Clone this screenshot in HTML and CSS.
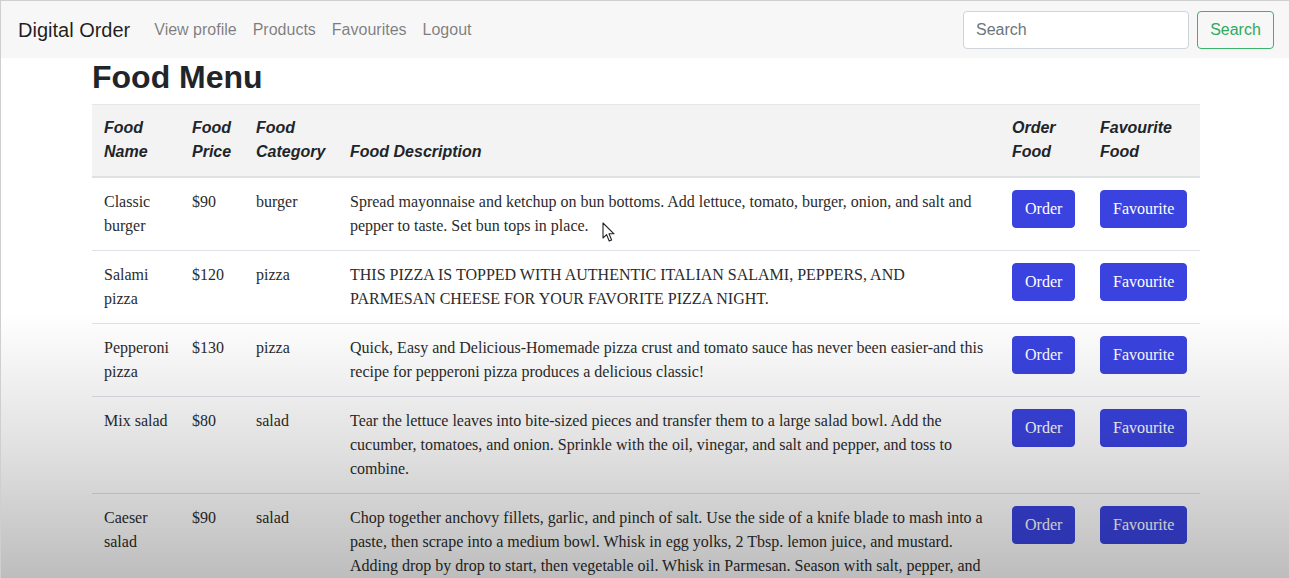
FILE: index.html
```html
<!DOCTYPE html>
<html lang="en">
<head>
<meta charset="utf-8">
<title>Digital Order</title>
<link rel="stylesheet" href="styles.css">
</head>
<body>
<div class="page">
  <nav class="navbar">
    <a class="brand" href="#">Digital Order</a>
    <ul class="nav-links">
      <li><a href="#">View profile</a></li>
      <li><a href="#">Products</a></li>
      <li><a href="#">Favourites</a></li>
      <li><a href="#">Logout</a></li>
    </ul>
    <form class="search">
      <input class="search-input" type="search" placeholder="Search">
      <button class="search-btn" type="button">Search</button>
    </form>
  </nav>

  <main class="container">
    <h2 class="title">Food Menu</h2>
    <table class="menu">
      <colgroup>
        <col class="w-name"><col class="w-price"><col class="w-cat"><col class="w-desc"><col class="w-order"><col class="w-fav">
      </colgroup>
      <thead>
        <tr>
          <th>Food Name</th>
          <th>Food Price</th>
          <th>Food Category</th>
          <th>Food Description</th>
          <th>Order Food</th>
          <th>Favourite Food</th>
        </tr>
      </thead>
      <tbody>
        <tr>
          <td>Classic burger</td>
          <td>$90</td>
          <td>burger</td>
          <td>Spread mayonnaise and ketchup on bun bottoms. Add lettuce, tomato, burger, onion, and salt and pepper to taste. Set bun tops in place.</td>
          <td><button class="btn" type="button">Order</button></td>
          <td><button class="btn" type="button">Favourite</button></td>
        </tr>
        <tr>
          <td>Salami pizza</td>
          <td>$120</td>
          <td>pizza</td>
          <td>THIS PIZZA IS TOPPED WITH AUTHENTIC ITALIAN SALAMI, PEPPERS, AND PARMESAN CHEESE FOR YOUR FAVORITE PIZZA NIGHT.</td>
          <td><button class="btn" type="button">Order</button></td>
          <td><button class="btn" type="button">Favourite</button></td>
        </tr>
        <tr>
          <td>Pepperoni pizza</td>
          <td>$130</td>
          <td>pizza</td>
          <td>Quick, Easy and Delicious-Homemade pizza crust and tomato sauce has never been easier-and this recipe for pepperoni pizza produces a delicious classic!</td>
          <td><button class="btn" type="button">Order</button></td>
          <td><button class="btn" type="button">Favourite</button></td>
        </tr>
        <tr>
          <td>Mix salad</td>
          <td>$80</td>
          <td>salad</td>
          <td>Tear the lettuce leaves into bite-sized pieces and transfer them to a large salad bowl. Add the cucumber, tomatoes, and onion. Sprinkle with the oil, vinegar, and salt and pepper, and toss to combine.</td>
          <td><button class="btn" type="button">Order</button></td>
          <td><button class="btn" type="button">Favourite</button></td>
        </tr>
        <tr>
          <td>Caeser salad</td>
          <td>$90</td>
          <td>salad</td>
          <td>Chop together anchovy fillets, garlic, and pinch of salt. Use the side of a knife blade to mash into a paste, then scrape into a medium bowl. Whisk in egg yolks, 2 Tbsp. lemon juice, and mustard. Adding drop by drop to start, then vegetable oil. Whisk in Parmesan. Season with salt, pepper, and more lemon juice.</td>
          <td><button class="btn" type="button">Order</button></td>
          <td><button class="btn" type="button">Favourite</button></td>
        </tr>
      </tbody>
    </table>
  </main>

  <div class="shade"></div>
  <svg class="cursor" width="14" height="21" viewBox="0 0 14 21" aria-hidden="true">
    <path d="M1 1 L1 16 L4.6 12.6 L7.2 19 L9.6 18 L7 11.8 L12 11.8 Z" fill="#fff" stroke="#222" stroke-width="1.1" stroke-linejoin="round"/>
  </svg>
</div>
</body>
</html>
```

FILE: styles.css
```css
* { box-sizing: border-box; }

html, body {
  margin: 0;
  padding: 0;
  background: #fff;
}

body {
  font-family: "Liberation Serif", "Times New Roman", serif;
  font-size: 16px;
  line-height: 1.5;
  color: #212529;
}

.page {
  position: relative;
  height: 578px;
  overflow: hidden;
  border-top: 1px solid #cfcfcf;
  border-left: 1px solid #cfcfcf;
}

/* Navbar */
.navbar {
  display: flex;
  align-items: center;
  height: 57px;
  padding: 0 15px 0 17px;
  background: #f7f7f8;
  font-family: "Liberation Sans", Arial, sans-serif;
}

.brand {
  font-size: 20px;
  color: rgba(0, 0, 0, 0.88);
  text-decoration: none;
  margin-right: 16px;
  line-height: 30px;
}

.nav-links {
  display: flex;
  list-style: none;
  margin: 0;
  padding: 0;
  flex: 1;
}

.nav-links a {
  display: block;
  padding: 8px 8px;
  font-size: 16px;
  color: rgba(0, 0, 0, 0.5);
  text-decoration: none;
}

.search {
  display: flex;
  align-items: center;
  margin: 0;
}

.search-input {
  width: 226px;
  height: 38px;
  padding: 6px 12px;
  font-family: "Liberation Sans", Arial, sans-serif;
  font-size: 16px;
  color: #495057;
  background: #fff;
  border: 1px solid #ced4da;
  border-radius: 4px;
  outline: none;
}

.search-input::placeholder { color: #6c757d; }

.search-btn {
  margin-left: 8px;
  height: 38px;
  width: 77px;
  padding: 6px 12px;
  font-family: "Liberation Sans", Arial, sans-serif;
  font-size: 16px;
  color: #2eaa5a;
  background: transparent;
  border: 1px solid #3bb36a;
  border-radius: 4px;
}

/* Content */
.container {
  width: 1108px;
  margin-left: 91px;
}

.title {
  margin: 0 0 8px;
  font-family: "Liberation Sans", Arial, sans-serif;
  font-size: 32px;
  font-weight: 700;
  line-height: 1.2;
  color: #212529;
}

.menu {
  width: 1108px;
  table-layout: fixed;
  border-collapse: collapse;
}

.w-name { width: 88px; }
.w-price { width: 64px; }
.w-cat { width: 94px; }
.w-desc { width: 662px; }
.w-order { width: 88px; }
.w-fav { width: 112px; }

.menu th {
  padding: 12px;
  text-align: left;
  vertical-align: bottom;
  font-family: "Liberation Sans", Arial, sans-serif;
  font-style: italic;
  font-weight: 700;
  font-size: 16px;
  line-height: 24px;
  background: #f3f3f3;
  box-shadow: inset 0 1px 0 #e6e6e6;
  border-bottom: 2px solid #dfe2e5;
}

.menu td {
  padding: 12px;
  vertical-align: top;
  line-height: 24px;
  color: #2b2b2b;
  border-top: 1px solid #dee2e6;
}

.menu thead + tbody tr:first-child td {
  border-top: 0;
}

.btn {
  display: inline-block;
  padding: 6px 12px;
  font-family: "Liberation Serif", "Times New Roman", serif;
  font-size: 16px;
  line-height: 24px;
  color: #fff;
  background: #3a43e0;
  border: 1px solid #3a43e0;
  border-radius: 4px;
  white-space: nowrap;
}

/* video-like shading overlay */
.shade {
  position: absolute;
  inset: 0;
  pointer-events: none;
  background:
    linear-gradient(to bottom,
      rgba(0, 0, 0, 0) 0%,
      rgba(0, 0, 0, 0) 54%,
      rgba(0, 0, 0, 0.05) 64%,
      rgba(0, 0, 0, 0.12) 78%,
      rgba(0, 0, 0, 0.26) 100%);
}

.cursor {
  position: absolute;
  left: 601px;
  top: 221px;
  pointer-events: none;
}
```
